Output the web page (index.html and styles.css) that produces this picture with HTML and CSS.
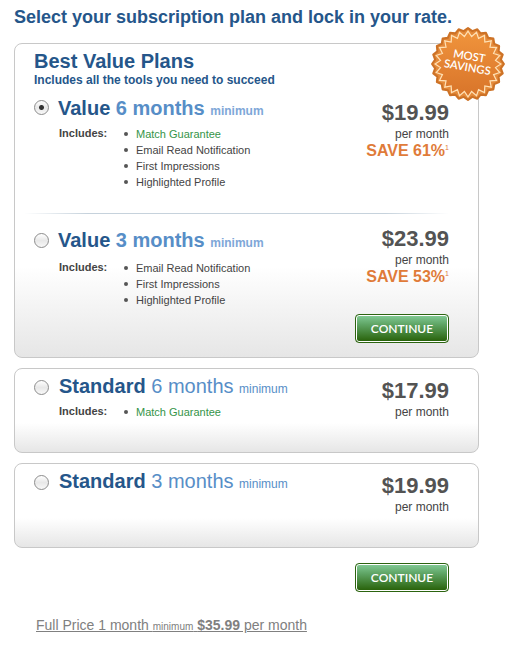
FILE: index.html
```html
<!DOCTYPE html>
<html lang="en">
<head>
    <meta charset="UTF-8">
    <meta name="viewport" content="width=device-width, initial-scale=1.0">
    <title>Subscription Plans</title>
    <link rel="stylesheet" href="styles.css">
</head>
<body>

<h1>Select your subscription plan and lock in your rate.</h1>

<form id="planForm">
    <section class="card best-value">
        <svg class="seal" viewBox="-37 -37 74 74" role="img" aria-label="Most savings">
            <defs>
                <linearGradient id="sealFill" x1="0" y1="0" x2="0" y2="1">
                    <stop offset="0" stop-color="#f0943c"/>
                    <stop offset="1" stop-color="#d8742a"/>
                </linearGradient>
            </defs>
            <polygon class="seal-edge" points="35,0 32,4.2 33.8,9.1 29.8,12.3 30.3,17.5 25.6,19.6 24.7,24.7 19.6,25.6 17.5,30.3 12.3,29.8 9.1,33.8 4.2,32 0,35 -4.2,32 -9.1,33.8 -12.3,29.8 -17.5,30.3 -19.6,25.6 -24.7,24.7 -25.6,19.6 -30.3,17.5 -29.8,12.3 -33.8,9.1 -32,4.2 -35,0 -32,-4.2 -33.8,-9.1 -29.8,-12.3 -30.3,-17.5 -25.6,-19.6 -24.7,-24.7 -19.6,-25.6 -17.5,-30.3 -12.3,-29.8 -9.1,-33.8 -4.2,-32 0,-35 4.2,-32 9.1,-33.8 12.3,-29.8 17.5,-30.3 19.6,-25.6 24.7,-24.7 25.6,-19.6 30.3,-17.5 29.8,-12.3 33.8,-9.1 32,-4.2"/>
            <polygon class="seal-face" points="32,0 26.8,3.5 30.9,8.3 24.9,10.3 27.7,16 21.4,16.4 22.6,22.6 16.4,21.4 16,27.7 10.3,24.9 8.3,30.9 3.5,26.8 0,32 -3.5,26.8 -8.3,30.9 -10.3,24.9 -16,27.7 -16.4,21.4 -22.6,22.6 -21.4,16.4 -27.7,16 -24.9,10.3 -30.9,8.3 -26.8,3.5 -32,0 -26.8,-3.5 -30.9,-8.3 -24.9,-10.3 -27.7,-16 -21.4,-16.4 -22.6,-22.6 -16.4,-21.4 -16,-27.7 -10.3,-24.9 -8.3,-30.9 -3.5,-26.8 0,-32 3.5,-26.8 8.3,-30.9 10.3,-24.9 16,-27.7 16.4,-21.4 22.6,-22.6 21.4,-16.4 27.7,-16 24.9,-10.3 30.9,-8.3 26.8,-3.5"/>
            <g class="seal-text" transform="rotate(10)">
                <text x="0" y="-4">MOST</text>
                <text x="0" y="7">SAVINGS</text>
            </g>
        </svg>

        <h2>Best Value Plans</h2>
        <p class="subtitle">Includes all the tools you need to succeed</p>

        <div class="plan">
            <input type="radio" name="plan" id="value6" checked>
            <div class="details">
                <label for="value6">Value <span class="term">6 months <small>minimum</small></span></label>
                <div class="includes">
                    <strong>Includes:</strong>
                    <ul>
                        <li class="match">Match Guarantee</li>
                        <li>Email Read Notification</li>
                        <li>First Impressions</li>
                        <li>Highlighted Profile</li>
                    </ul>
                </div>
            </div>
            <div class="price">
                <strong>$19.99</strong>
                <span>per month</span>
                <em>SAVE 61%<sup>1</sup></em>
            </div>
        </div>

        <hr>

        <div class="plan value-three">
            <input type="radio" name="plan" id="value3">
            <div class="details">
                <label for="value3">Value <span class="term">3 months <small>minimum</small></span></label>
                <div class="includes">
                    <strong>Includes:</strong>
                    <ul>
                        <li>Email Read Notification</li>
                        <li>First Impressions</li>
                        <li>Highlighted Profile</li>
                    </ul>
                </div>
            </div>
            <div class="price">
                <strong>$23.99</strong>
                <span>per month</span>
                <em>SAVE 53%<sup>1</sup></em>
            </div>
        </div>

        <div class="actions">
            <button type="submit">CONTINUE</button>
        </div>
    </section>

    <section class="card standard">
        <div class="plan">
            <input type="radio" name="plan" id="standard6">
            <div class="details">
                <label for="standard6">Standard <span class="term">6 months <small>minimum</small></span></label>
                <div class="includes">
                    <strong>Includes:</strong>
                    <ul>
                        <li class="match">Match Guarantee</li>
                    </ul>
                </div>
            </div>
            <div class="price">
                <strong>$17.99</strong>
                <span>per month</span>
            </div>
        </div>
    </section>

    <section class="card standard">
        <div class="plan">
            <input type="radio" name="plan" id="standard3">
            <div class="details">
                <label for="standard3">Standard <span class="term">3 months <small>minimum</small></span></label>
            </div>
            <div class="price">
                <strong>$19.99</strong>
                <span>per month</span>
            </div>
        </div>
    </section>

    <div class="actions form-actions">
        <button type="submit">CONTINUE</button>
    </div>
</form>

<a class="full-price" href="#">Full Price 1 month <small>minimum</small> <strong>$35.99</strong> per month</a>

</body>
</html>
```
FILE: styles.css
```css
* { box-sizing: border-box; }
body { margin: 0; padding: 6px 41px 14px 14px; background-color: #fff; color: #444; font-family: "Liberation Sans", Arial, sans-serif; font-size: 12px; line-height: 14px; }
h1 { margin: 0 0 15px; color: #25568a; font-size: 18px; line-height: 22px; }
h2 { margin: 0; color: #25568a; font-size: 20px; line-height: 24px; }

.card { position: relative; margin-bottom: 10px; padding: 5px 29px 0 19px; border: 1px solid #c8c8c8; border-radius: 8px; background: #fff; }
.best-value { padding-bottom: 14px; background: linear-gradient(#fff, #fff calc(100% - 90px), #e6e6e6); }
.standard { min-height: 85px; background: linear-gradient(#fff 65%, #e6e6e6); }
.subtitle { margin: 0 0 9px; color: #25568a; font-weight: bold; }

.plan { display: flex; align-items: flex-start; }
.details { flex: 1; padding-left: 9px; }
.plan label { display: block; color: #25568a; font-size: 20px; font-weight: bold; line-height: 24px; }
.standard label { padding-left: 1px; }
.term { color: #578ec7; }
.term small { color: #7ea7d8; font-size: 12px; }
.standard .term { font-weight: normal; }
.standard .term small { color: #578ec7; }

input[type="radio"] { appearance: none; flex: none; width: 15px; height: 15px; margin: 4px 0 0; border: 1px solid #8c8c8c; border-radius: 50%; background: linear-gradient(#fff, #e8e8e8 50%, #f8f8f8); }
input[type="radio"]:checked { background: radial-gradient(circle, #333 2px, transparent 3px), linear-gradient(#fff, #e8e8e8 50%, #f8f8f8); }
.standard input[type="radio"] { margin-top: 6px; }

.includes { display: flex; padding: 3px 0 0 1px; font-size: 11px; line-height: 16px; }
.includes strong { width: 65px; line-height: 14px; }
.includes ul { margin: 0; padding: 0; list-style: none; }
.includes li { display: flex; align-items: center; gap: 8px; }
.includes li::before { content: ""; width: 4px; height: 4px; border-radius: 50%; background: #555; }
.match { color: #359448; }

.price { padding-top: 4px; text-align: right; }
.price strong { display: block; color: #535353; font-size: 22px; line-height: 26px; }
.price span { display: block; line-height: 16px; }
.price em { display: block; color: #e07b39; font-size: 16px; font-style: normal; font-weight: bold; line-height: 18px; }
.price sup { font-size: 7px; font-weight: normal; line-height: 0; vertical-align: 6px; }

hr { height: 1px; margin: 23px 0 12px -10px; border: none; background: linear-gradient(to right, transparent, #c6d2dc 15%, #c6d2dc 85%, transparent); }
.value-three label { padding-top: 2px; }
.value-three .includes { padding-top: 5px; }
.value-three .price { padding-top: 0; }
.value-three input[type="radio"] { margin-top: 7px; }

.actions { margin-top: 6px; text-align: right; }
.form-actions { margin-top: 15px; padding-right: 30px; }
button { width: 94px; height: 29px; padding: 0; border: 1px solid #2c6410; border-radius: 4px; background: linear-gradient(#84cc98, #5fa565 35%, #265f06); box-shadow: inset 0 0 0 1px #fff; color: #fff; font-family: Lato, sans-serif; font-size: 12px; font-weight: 600; cursor: pointer; }

.full-price { display: inline-block; margin: 25px 0 0 22px; color: #808080; font-size: 14px; line-height: 16px; }
.full-price small { font-size: 10px; }

.seal { position: absolute; top: -18px; right: -28px; width: 76px; height: 76px; }
.seal-edge { fill: #e48a3a; stroke: #cd7226; stroke-width: 2; stroke-linejoin: round; }
.seal-face { fill: url(#sealFill); stroke: #ffe0b4; stroke-width: 1.2; }
.seal-text { fill: #fff; font-family: Lato, sans-serif; font-size: 11px; font-weight: 600; text-anchor: middle; }
```
